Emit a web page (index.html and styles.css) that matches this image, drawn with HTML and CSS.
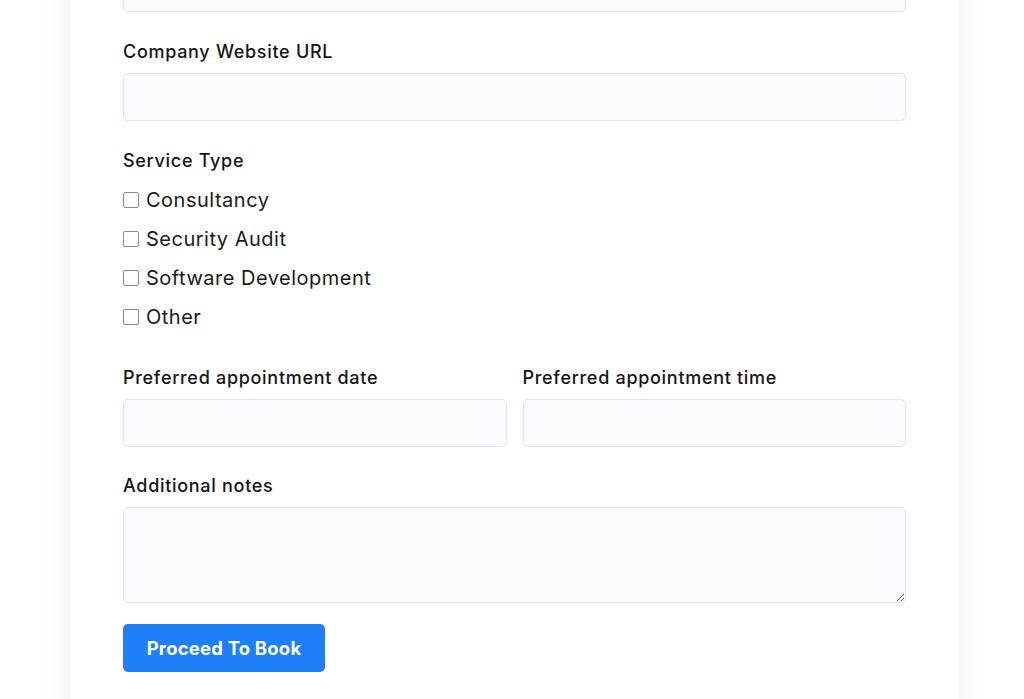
FILE: index.html
```html
<!DOCTYPE html>
<html lang="en">
<head>
    <meta charset="UTF-8">
    <meta name="viewport" content="width=device-width, initial-scale=1.0">
    <title>Book an Appointment</title>
    <link rel="stylesheet" href="styles.css">
</head>
<body>
    <div class="card">
        <form class="booking-form">
            <!-- field above, scrolled partly out of view -->
            <div class="field field-cut">
                <input type="text" class="input">
            </div>

            <div class="field">
                <label class="label">Company Website URL</label>
                <input type="text" class="input">
            </div>

            <div class="field service">
                <label class="label">Service Type</label>
                <div class="checks">
                    <label class="check"><input type="checkbox"> Consultancy</label>
                    <label class="check"><input type="checkbox"> Security Audit</label>
                    <label class="check"><input type="checkbox"> Software Development</label>
                    <label class="check"><input type="checkbox"> Other</label>
                </div>
            </div>

            <div class="row">
                <div class="field">
                    <label class="label">Preferred appointment date</label>
                    <input type="text" class="input">
                </div>
                <div class="field">
                    <label class="label">Preferred appointment time</label>
                    <input type="text" class="input">
                </div>
            </div>

            <div class="field notes">
                <label class="label">Additional notes</label>
                <textarea class="input textarea"></textarea>
            </div>

            <button type="button" class="btn">Proceed To Book</button>
        </form>
    </div>
</body>
</html>
```

FILE: styles.css
```css
body {
    margin: 0;
    background: #ffffff;
    font-family: 'Inter', 'Noto Sans', sans-serif;
    color: #1a1a1a;
    overflow: hidden;
}

.card {
    width: 887px;
    margin-left: 71px;
    background: #ffffff;
    box-shadow: 0 0 32px rgba(0, 0, 0, 0.07);
    padding: 0 52px 60px;
    box-sizing: border-box;
}

.booking-form {
    margin-top: -36px;
}

.field {
    margin-bottom: 28px;
}

.label {
    display: block;
    font-size: 18px;
    font-weight: 500;
    line-height: 24px;
    letter-spacing: 0.7px;
    margin-bottom: 9px;
    color: #151515;
}

.input {
    display: block;
    width: 100%;
    height: 48px;
    box-sizing: border-box;
    background: #f8fafd;
    border: 1px solid #dfe4f0;
    border-radius: 5px;
    font-family: inherit;
    font-size: 16px;
    padding: 8px 12px;
}

/* the field cut off at the top, with a faint image blur on its right */
.field-cut .input {
    background: radial-gradient(ellipse 90px 14px at 700px 0, rgba(232, 224, 196, 0.6), rgba(248, 250, 253, 0) 100%), #f8fafd;
}

.service .label {
    margin-bottom: 13px;
}

.checks {
    display: flex;
    flex-direction: column;
    gap: 11px;
}

.check {
    display: flex;
    align-items: center;
    gap: 7px;
    font-size: 20px;
    line-height: 28px;
    letter-spacing: 0.5px;
    color: #1a1a1a;
}

.check input {
    width: 16px;
    height: 16px;
    margin: 0;
    appearance: none;
    border: 1px solid #8a8a8a;
    border-radius: 2px;
    background: #fff;
}

.service {
    margin-bottom: 35px;
}

.row {
    display: grid;
    grid-template-columns: 1fr 1fr;
    gap: 16px;
}

.row .field {
    margin-bottom: 27px;
}

.notes {
    margin-bottom: 21px;
}

.textarea {
    height: 96px;
    resize: vertical;
    border-color: #dfeaf2;
}

.btn {
    display: block;
    width: 202px;
    height: 48px;
    background: #1d80f6;
    color: #fff;
    border: none;
    border-radius: 5px;
    font-family: inherit;
    font-size: 18.5px;
    font-weight: 700;
    letter-spacing: 0.2px;
    cursor: pointer;
}
```
